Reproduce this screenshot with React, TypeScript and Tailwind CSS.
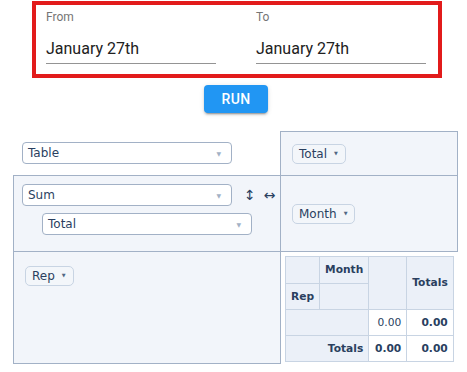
import React from 'react';

function Dropdown({ label, className = '' }: { label: string; className?: string }) {
  return (
    <div
      className={`w-[210px] h-[22px] border border-[#a2b1c6] rounded-[4px] bg-white flex items-center justify-between pl-[5px] pr-[10px] text-[12px] text-[#2a3f5f] ${className}`}
    >
      <span>{label}</span>
      <span className="text-[6px] text-[#a2b1c6]">▼</span>
    </div>
  );
}

function Pill({ label }: { label: string }) {
  return (
    <span className="inline-flex items-center h-[20px] pl-[6px] pr-[7px] border border-[#c8d4e3] rounded-[5px] bg-[#f3f6fa] text-[12px] text-[#2a3f5f] whitespace-nowrap">
      {label}
      <span className="ml-[7px] text-[5px] text-[#506784]">▼</span>
    </span>
  );
}

function DateField({ label, value }: { label: string; value: string }) {
  return (
    <div className="w-[170px] flex flex-col">
      <span className="text-[12px] leading-[12px] text-[#757575]">{label}</span>
      <span className="mt-[18px] text-[16px] leading-[16px] text-[#212121] pb-[6px] border-b border-[#949494]">{value}</span>
    </div>
  );
}

export default function App() {
  return (
    <div className="w-[467px] h-[372px] bg-white overflow-hidden font-['Roboto',sans-serif]">
      {/* Date range */}
      <div className="ml-[32px] mt-[1px] w-[410px] h-[77px] border-4 border-[#e21b1b] flex gap-[40px] pl-[10px] pt-[6px]">
        <DateField label="From" value="January 27th" />
        <DateField label="To" value="January 27th" />
      </div>

      <button className="ml-[204px] mt-[7px] w-[64px] h-[28px] rounded-[4px] bg-[#2196f3] text-white text-[14px] font-medium tracking-[0.4px] shadow-[0_3px_1px_-2px_rgba(0,0,0,0.2),0_2px_2px_0_rgba(0,0,0,0.14),0_1px_5px_0_rgba(0,0,0,0.12)]">
        RUN
      </button>

      {/* Pivot UI */}
      <div className="mt-[18px] ml-[13px] flex flex-col font-['DejaVu_Sans',Verdana,sans-serif] text-[#2a3f5f]">
        <div className="flex h-[44px]">
          <div className="w-[267px] pl-[9px] pt-[11px]">
            <Dropdown label="Table" />
          </div>
          <div className="w-[178px] border-t border-l border-r border-[#a2b1c6] bg-[#f2f5fa] flex items-center pl-[11px]">
            <Pill label="Total" />
          </div>
        </div>

        <div className="flex h-[76px]">
          <div className="w-[268px] border-t border-l border-r border-[#a2b1c6] bg-[#f2f5fa] pl-[8px] pt-[8px]">
            <div className="flex items-center">
              <Dropdown label="Sum" />
              <span className="ml-[12px] text-[14px] leading-none">↕</span>
              <span className="ml-[8px] text-[14px] leading-none">↔</span>
            </div>
            <Dropdown label="Total" className="ml-[20px] mt-[7px]" />
          </div>
          <div className="w-[177px] border-t border-r border-[#a2b1c6] bg-[#f2f5fa] flex items-center pl-[11px]">
            <Pill label="Month" />
          </div>
        </div>

        <div className="flex h-[113px]">
          <div className="w-[268px] border border-[#a2b1c6] bg-[#f2f5fa] pl-[11px] pt-[11px]">
            <Pill label="Rep" />
          </div>
          <div className="w-[177px] border-t border-[#a2b1c6] pl-[4px] pt-[4px]">
            <table className="border-collapse text-[10.67px] text-[#2a3f5f]">
              <thead>
                <tr className="h-[27px]">
                  <th className="border border-[#c8d4e3] bg-[#ebf0f8] px-[5px]"></th>
                  <th className="border border-[#c8d4e3] bg-[#ebf0f8] px-[5px] text-left font-bold">Month</th>
                  <th rowSpan={2} className="border border-[#c8d4e3] bg-[#ebf0f8] px-[5px] w-[38px]"></th>
                  <th rowSpan={2} className="border border-[#c8d4e3] bg-[#ebf0f8] px-[5px] text-right font-bold">Totals</th>
                </tr>
                <tr className="h-[26px]">
                  <th className="border border-[#c8d4e3] bg-[#ebf0f8] px-[5px] text-left font-bold">Rep</th>
                  <th className="border border-[#c8d4e3] bg-[#ebf0f8] px-[5px]"></th>
                </tr>
              </thead>
              <tbody>
                <tr className="h-[26px]">
                  <th colSpan={2} className="border border-[#c8d4e3] bg-[#ebf0f8] px-[5px]"></th>
                  <td className="border border-[#c8d4e3] bg-white px-[5px] text-right">0.00</td>
                  <td className="border border-[#c8d4e3] bg-white px-[5px] text-right font-bold">0.00</td>
                </tr>
                <tr className="h-[26px]">
                  <th colSpan={2} className="border border-[#c8d4e3] bg-[#ebf0f8] px-[5px] text-right font-bold">Totals</th>
                  <td className="border border-[#c8d4e3] bg-white px-[5px] text-right font-bold">0.00</td>
                  <td className="border border-[#c8d4e3] bg-white px-[5px] text-right font-bold">0.00</td>
                </tr>
              </tbody>
            </table>
          </div>
        </div>
      </div>
    </div>
  );
}
